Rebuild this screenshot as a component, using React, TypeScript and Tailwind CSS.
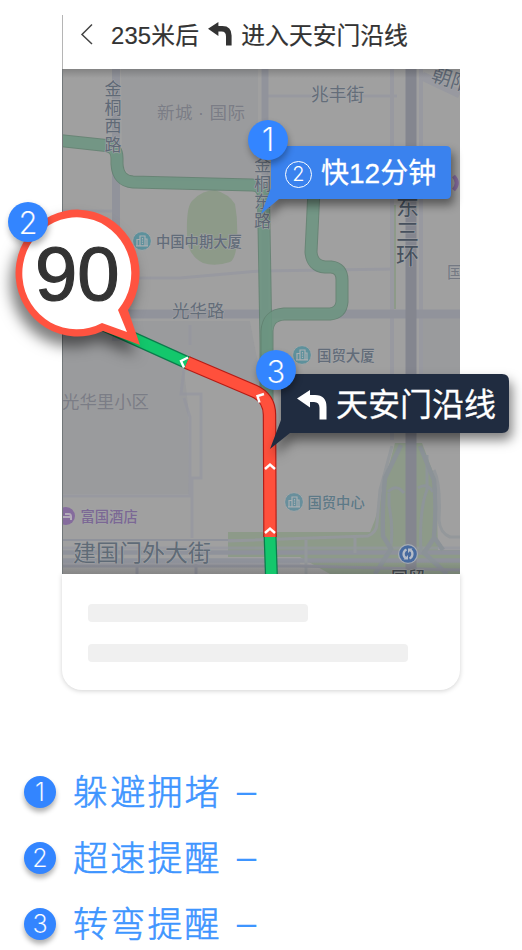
import React from "react";

const FONT = "font-['Liberation_Sans','Noto_Sans_CJK_SC',sans-serif]";

type LabelProps = {
  x: number;
  y: number;
  size: number;
  width?: number;
  fill: string;
  weight?: number;
  halo?: string;
  children: string;
};

function Label({ x, y, size, width, fill, weight = 400, halo = "#a3a4a6", children }: LabelProps) {
  return (
    <text x={x} y={y} fontSize={size} fontWeight={weight} textLength={width} fill={fill} stroke={halo} strokeWidth={1.2} strokeLinejoin="round" paintOrder="stroke">
      {children}
    </text>
  );
}

function Column({ x, y, step, size, fill, text, weight = 400 }: { x: number; y: number; step: number; size: number; fill: string; text: string; weight?: number }) {
  return (
    <>
      {text.split("").map((c, i) => (
        <Label key={i} x={x} y={y + i * step} size={size} fill={fill} weight={weight}>
          {c}
        </Label>
      ))}
    </>
  );
}

function Building({ x, y, color }: { x: number; y: number; color: string }) {
  return (
    <g transform={`translate(${x} ${y})`}>
      <circle r="9.4" fill={color} stroke="#a5a7a8" strokeWidth="1" />
      <g fill="none" stroke="#a9afb2" strokeWidth="1.2">
        <path d="M-2 4.5V-5H3V4.5M-5 4.5V-1.5H-2M3 -2H5V4.5M-6 4.8H6" />
        <path d="M.5 -3V3" strokeDasharray="1.4 1" />
      </g>
    </g>
  );
}

const ROUTES = [
  "M60 140.5L106 145.5Q117 147 117 158V164Q118 181 133 182L252 185Q263 185.500 263.500 196L266 345V400",
  "M314 190L311 252Q312 266 325 267L331 267Q342 268 342 280V302Q341 313 330 314H284Q268 315 267 331V400",
];

function MapView() {
  return (
    <svg className="block h-[505px] w-[398px]" viewBox="62 69 398 505">
      <defs>
        <linearGradient id="topShade" x1="0" y1="0" x2="0" y2="1">
          <stop offset="0" stopColor="#000" stopOpacity=".18" />
          <stop offset="1" stopColor="#000" stopOpacity="0" />
        </linearGradient>
        <linearGradient id="bottomShade" x1="0" y1="0" x2="0" y2="1">
          <stop offset="0" stopColor="#000" stopOpacity="0" />
          <stop offset="1" stopColor="#000" stopOpacity=".16" />
        </linearGradient>
      </defs>
      <rect x="62" y="69" width="398" height="505" fill="#a0a0a0" />

      {/* city blocks */}
      <g fill="#9a9b9d">
        <path d="M121 69H258V181H136L122 166Z" />
        <path d="M62 321H250L262 385L184 370L188 405L189 494H62Z" />
        <path d="M423 318H460V410H423Z" />
      </g>

      {/* parks */}
      <g fill="#8d9a89">
        <path d="M187 235Q186 205 193 200Q203 190 215 190Q229 194 235 204Q238 220 237 240Q236 259 230 262Q215 267 203 263Q187 255 187 235Z" />
        <path d="M228 532H370Q378 515 382 491L395 443H422L436 480L438 550H460V574H330L300 557H228Z" />
      </g>

      {/* minor streets */}
      <g fill="none" stroke="#9496a0" strokeWidth="3" opacity=".65">
        <path d="M268 96H397M62 278H180L260 271L396 269M190 325V345M62 211H118" />
        <path d="M392 69V440M421 69V380" strokeWidth="4" />
        <path d="M184 370L181 394H201V478H192V538M184 398L190 417V496H62" />
        <path d="M422 76L460 94" strokeWidth="9" />
        <path d="M62 548H460M62 563H300" />
      </g>
      <path d="M395 205V309" stroke="#8d9a89" strokeWidth="2" />

      {/* main streets */}
      <g fill="none" stroke="#91939b">
        <path d="M116 69V341" strokeWidth="8" />
        <path d="M265 69V380" strokeWidth="7" />
        <path d="M62 314H460" strokeWidth="9" />
        <path d="M62 540H240" strokeWidth="2" stroke="#8f929b" />
        <path d="M62 552.500H460M62 560.500H460" strokeWidth="4.500" stroke="#8f929b" />
        <path d="M228 541L368 536Q377 532 377 523L380 490L392 446M434 470Q441 485 439 520Q440 533 450 537H460M306 540V574M355 538V553" strokeWidth="3" stroke="#94989b" />
        <path d="M388 492Q396 483 404 493M418 488Q427 482 433 492M389 493V505Q394 530 390 552M427 455V490Q419 510 421 552" strokeWidth="3" stroke="#8e9599" />
        <path d="M401 445L385 478Q382 505 383 536L391 549L375 574M420 446L434 480Q437 505 434 537L443 550M434 538L424 553L447 574" strokeWidth="4.500" stroke="#8b9297" />
        <path d="M62 566H300L460 570M137 564V574M196 564V574" strokeWidth="3" stroke="#8e9099" />
        <path d="M411 69V570" strokeWidth="11" stroke="#84868f" />
      </g>

      {/* alternative routes */}
      {ROUTES.map((d) => (
        <g key={d} fill="none" opacity=".85">
          <path d={d} stroke="#60806f" strokeWidth="13" />
          <path d={d} stroke="#6c9581" strokeWidth="11" />
        </g>
      ))}

      <Column x={104.500} y={95} step={18.500} size={17} fill="#5f6976" text="金桐西路" />
      <Column x={254} y={171} step={18.500} size={17} fill="#5f6976" text="金桐东路" />
      <Column x={396} y={215} step={24.500} size={23} fill="#46505d" text="东三环" />
      <Label x={157} y={119} size={17.500} width={88} fill="#7b7d86" halo="#9c9d9f">新城 · 国际</Label>
      <Label x={311} y={101} size={17.700} fill="#646d79">兆丰街</Label>
      <g transform="rotate(18 430 78)">
        <Label x={431} y={80} size={20} fill="#5f6976">朝阳</Label>
      </g>
      <Building x={142} y={241} color="#5e919c" />
      <Label x={156} y={247} size={14.300} fill="#626c79" weight={500}>中国中期大厦</Label>
      <Label x={172} y={317} size={17.500} fill="#646d79">光华路</Label>
      <Building x={302} y={355} color="#5e919c" />
      <Label x={317} y={361} size={14.400} fill="#626c79" weight={500}>国贸大厦</Label>
      <Label x={62} y={408} size={17.400} fill="#7b7d86" halo="#9c9d9f">光华里小区</Label>
      <Building x={294} y={502} color="#688f9c" />
      <Label x={307.500} y={508} size={14.300} fill="#5d7986" weight={500}>国贸中心</Label>
      <circle cx="66" cy="516" r="9" fill="#856c9d" />
      <path d="M60 512V520M61 517H71V520M65 514H69Q71 514 71 517" fill="none" stroke="#b3acb9" strokeWidth="2" />
      <Label x={80.500} y={522} size={14.300} fill="#7b6894" weight={500}>富国酒店</Label>
      <Label x={73} y={561} size={23} fill="#5f6b77">建国门外大街</Label>
      <Label x={447} y={278} size={16} fill="#747983">国</Label>
      <Label x={391} y={584} size={17} fill="#454b50" weight={500}>国贸</Label>
      <path d="M453.500 176Q460 183 453.500 190" fill="none" stroke="#856c9d" strokeWidth="4" />

      <circle cx="408" cy="554" r="10" fill="#a8adb4" />
      <circle cx="408" cy="554" r="8.800" fill="#486b9f" />
      <path d="M406.500 549.500A5 5 0 0 0 405.500 558M409.500 558.500A5 5 0 0 0 410.500 550" fill="none" stroke="#b5bcc8" strokeWidth="2.300" />
      <path d="M403.500 559.500H408V555ZM412.500 548.500H408V553Z" fill="#b5bcc8" />

      <rect x="62" y="69" width="398" height="9" fill="url(#topShade)" />
      <rect x="62" y="561" width="398" height="13" fill="url(#bottomShade)" />
      <path d="M62.500 69V574" stroke="#727779" />

      {/* active route with traffic */}
      <g fill="none">
        <path d="M95 321L188 363M270 534L271.500 578" stroke="#0b7c4c" strokeWidth="13" />
        <path d="M95 321L188 363M270 534L271.500 578" stroke="#13c76c" strokeWidth="10.500" />
        <path d="M187 362.500L254 391Q269.500 398 269.500 415L270 537" stroke="#b51c16" strokeWidth="13.500" />
        <path d="M187 362.500L254 391Q269.500 398 269.500 415L270 537" stroke="#ff503c" strokeWidth="11.200" />
        <g stroke="#fff" strokeWidth="2.400">
          <path d="M265 469L270 464.500L275 469M265 533L270 528.500L275 533" />
          <path d="M188 357.500L181 361L184 367.500M264 394L257.500 396L259.500 402.500" />
        </g>
      </g>
    </svg>
  );
}

function TurnArrow({ className }: { className: string }) {
  return (
    <svg className={className} viewBox="0 0 30 30">
      <path d="M0 8.500L13 0V5H18Q29.500 5 29.500 17V29.500H22.500V18Q22.500 12 17 12H13V17.500Z" fill="currentColor" />
    </svg>
  );
}

function Badge({ n, className }: { n: number; className: string }) {
  return (
    <span className={`flex items-center justify-center rounded-full bg-[#3385ff] text-white ${className}`}>
      <span className="font-['Inter','Liberation_Sans',sans-serif] font-light [-webkit-text-stroke:0.2px_#3385ff]">{n}</span>
    </span>
  );
}

function LegendRow({ n, text }: { n: number; text: string }) {
  return (
    <li className="flex h-[66px] items-center">
      <Badge n={n} className="h-8 w-8 text-[25px] leading-none shadow-[0_4px_5px_rgba(0,0,0,0.3)]" />
      <span className="ml-[17px] text-[35px] font-light leading-none tracking-[2.200px] text-[#3e95ff] [-webkit-text-stroke:0.6px_#3e95ff]">{text}</span>
      <span className="ml-[15px] -translate-y-0.5 text-[35px] leading-none text-[#3e95ff]">–</span>
    </li>
  );
}

export default function App() {
  return (
    <main className={`relative h-[950px] w-[522px] overflow-hidden bg-white pt-[15px] ${FONT}`}>
      <section className="ml-[62px] w-[398px]">
        <header className="flex h-[54px] items-center border-l border-[#b5b5b5] bg-white pb-[13px] pl-[17px] text-[23.800px] leading-none text-[#333] [-webkit-text-stroke:0.200px_#333]">
          <svg className="h-[22px] w-[13px] -translate-y-0.5" viewBox="0 0 13 22">
            <path d="M12 1.500L2 11.500L12 21" fill="none" stroke="#444" strokeWidth="1.500" />
          </svg>
          <span className="ml-[18px] whitespace-nowrap tracking-[0.200px]">235米后</span>
          <TurnArrow className="ml-[9px] h-6 w-6 -translate-y-0.5" />
          <span className="ml-[9px] whitespace-nowrap">进入天安门沿线</span>
        </header>
        <MapView />
        <footer className="flex h-[116px] flex-col gap-[22px] rounded-b-[20px] bg-white pl-[26px] pt-[30px] shadow-[0_1px_5px_rgba(0,0,0,0.18)]">
          <div className="h-[18px] w-[220px] rounded bg-[#f0f0f0]" />
          <div className="h-[18px] w-[320px] rounded bg-[#f0f0f0]" />
        </footer>
      </section>

      <ul className="ml-6 mt-[69px]">
        <LegendRow n={1} text="躲避拥堵" />
        <LegendRow n={2} text="超速提醒" />
        <LegendRow n={3} text="转弯提醒" />
      </ul>

      {/* time-saved callout */}
      <div className="absolute left-[260px] top-[146px] h-[70px] w-[192px]">
        <svg className="absolute inset-0 overflow-visible drop-shadow-[3px_6px_5px_rgba(0,0,0,0.45)]" width="192" height="70" viewBox="0 0 192 70">
          <path d="M11 0H186Q191 0 191 5V48Q191 53 186 53H19L1 68L11 42Z" fill="#3a82ee" />
        </svg>
        <div className="relative flex h-[53px] items-center pl-[25px] pt-[3px] text-white">
          <span className="flex h-[27px] w-[27px] items-center justify-center rounded-full border-[1.500px] border-white font-['Inter',sans-serif] text-[20px] font-light leading-none">2</span>
          <span className="ml-[9px] whitespace-nowrap text-[28px] leading-none [-webkit-text-stroke:0.300px_#fff]">快12分钟</span>
        </div>
      </div>
      <Badge n={1} className="absolute left-[248px] top-[120px] h-10 w-10 text-[32px] leading-none shadow-[1px_4px_6px_rgba(0,0,0,0.3)]" />

      {/* speed-limit callout */}
      <svg className="absolute left-0 top-[200px] overflow-visible drop-shadow-[-5px_10px_7px_rgba(0,0,0,0.5)]" width="150" height="150" viewBox="0 200 150 150">
        <path d="M103 331A62 63.500 0 1 1 128 310L140 345Z" fill="#ff5340" />
        <path d="M102 323A54.500 56 0 1 1 118 310L127 332Z" fill="#fff" />
      </svg>
      <span className="absolute left-[35px] top-[236px] text-[76px] leading-none text-[#333] [-webkit-text-stroke:1.200px_#333]">90</span>
      <Badge n={2} className="absolute left-2 top-[202px] h-10 w-10 text-[31px] leading-none shadow-[1px_4px_6px_rgba(0,0,0,0.3)]" />

      {/* turn callout */}
      <div className="absolute left-[269px] top-[374px] h-[76px] w-[240px]">
        <svg className="absolute inset-0 overflow-visible drop-shadow-[3px_7px_6px_rgba(0,0,0,0.5)]" width="240" height="76" viewBox="0 0 240 76">
          <path d="M12 0H233Q240 0 240 7V52Q240 59 233 59H21L1 75L12 46Z" fill="#202c40" />
        </svg>
        <div className="relative flex h-[59px] items-center pl-[28px] pt-[3px] text-white">
          <TurnArrow className="h-[30px] w-[30px]" />
          <span className="ml-[9px] whitespace-nowrap text-[32px] leading-none [-webkit-text-stroke:0.300px_#fff]">天安门沿线</span>
        </div>
      </div>
      <Badge n={3} className="absolute left-[256px] top-[350px] h-10 w-10 pt-0.5 text-[31px] leading-none shadow-[1px_4px_6px_rgba(0,0,0,0.3)]" />
    </main>
  );
}
